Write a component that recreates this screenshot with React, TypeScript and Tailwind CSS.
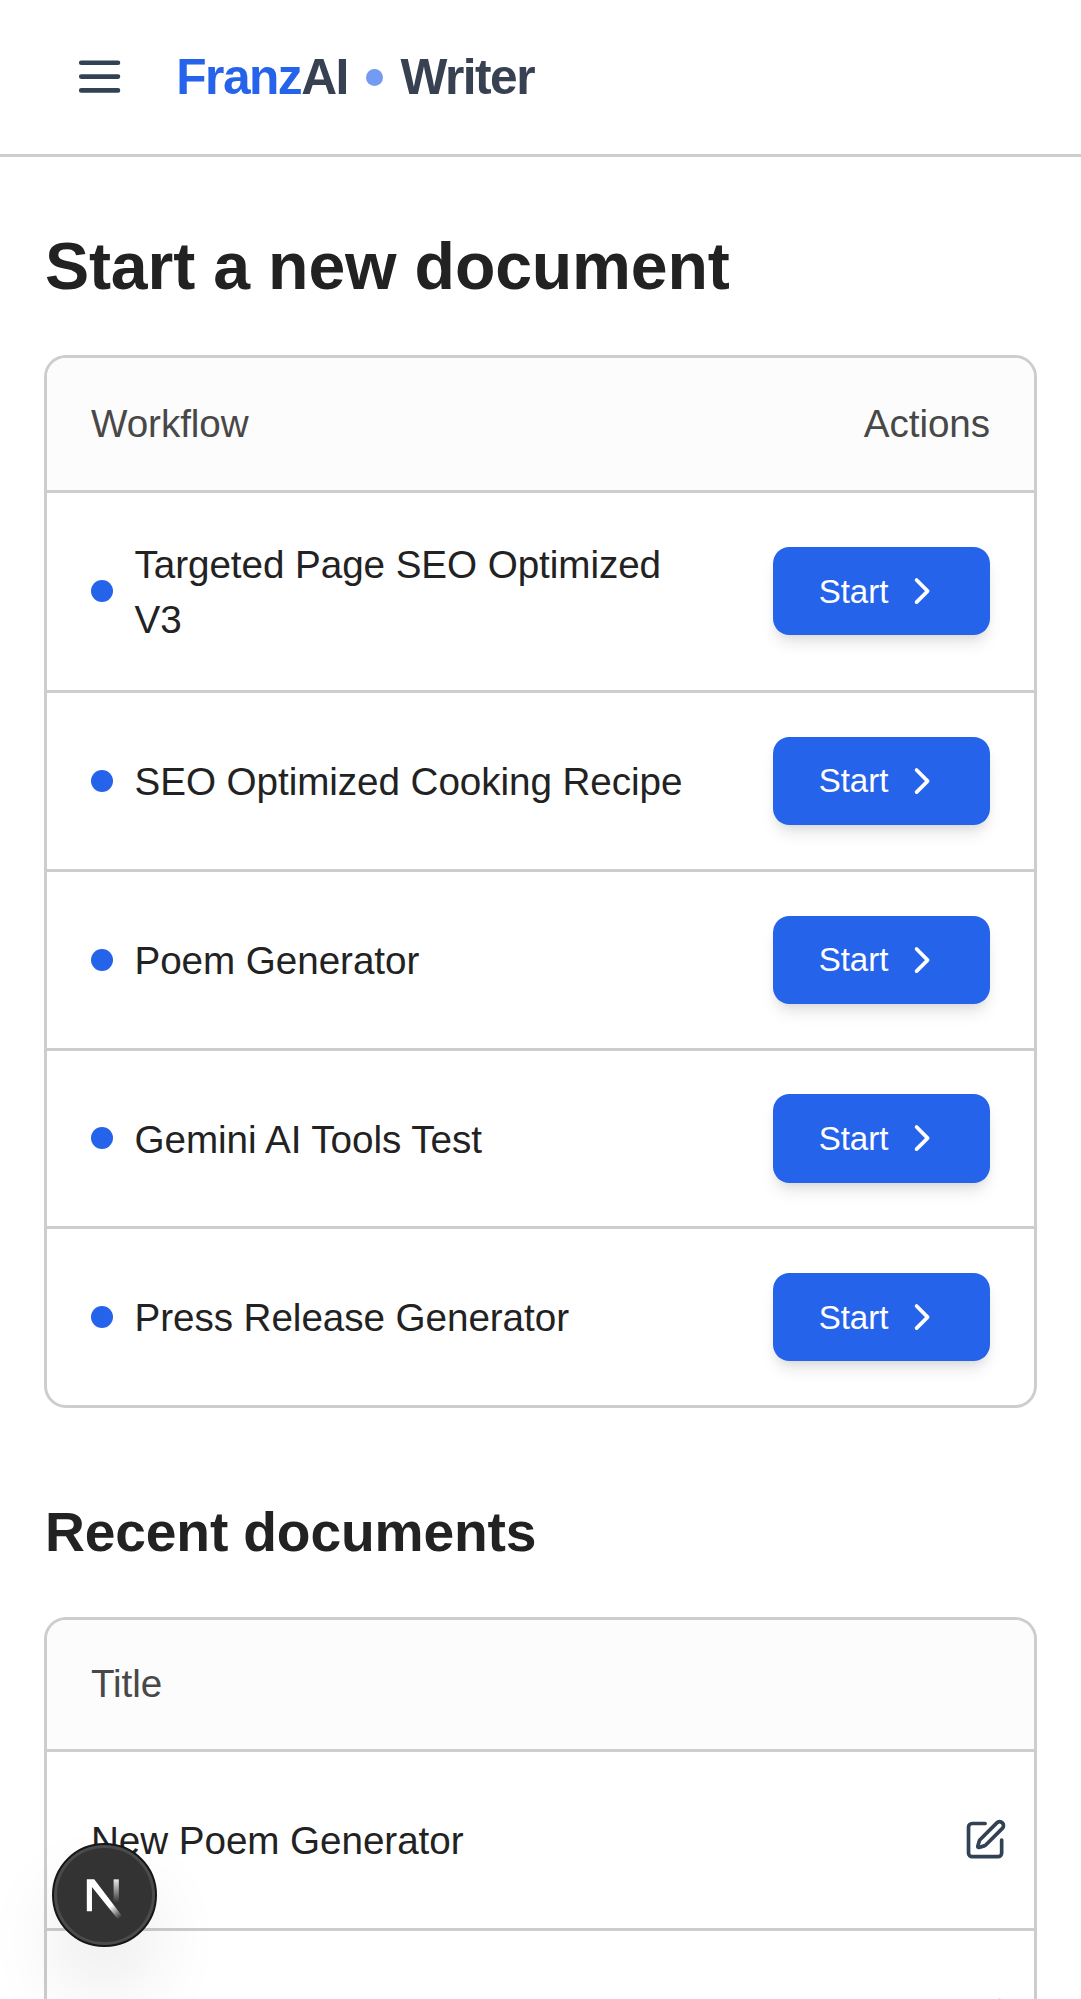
import React from "react";

const workflows = [
  "Targeted Page SEO Optimized V3",
  "SEO Optimized Cooking Recipe",
  "Poem Generator",
  "Gemini AI Tools Test",
  "Press Release Generator",
];

const documents = ["New Poem Generator", ""];

function MenuIcon() {
  return (
    <svg
      className="h-[55.2px] w-[55.2px] text-[#334155]"
      viewBox="0 0 24 24"
      fill="none"
      stroke="currentColor"
      strokeWidth="2"
      strokeLinecap="round"
    >
      <path d="M4 6h16M4 12h16M4 18h16" />
    </svg>
  );
}

function ChevronRight() {
  return (
    <svg
      className="h-[44.2px] w-[44.2px]"
      viewBox="0 0 24 24"
      fill="none"
      stroke="currentColor"
      strokeWidth="2"
      strokeLinecap="round"
      strokeLinejoin="round"
    >
      <path d="m9 18 6-6-6-6" />
    </svg>
  );
}

function EditIcon() {
  return (
    <svg
      className="h-[44.2px] w-[44.2px] text-[#334155]"
      viewBox="0 0 24 24"
      fill="none"
      stroke="currentColor"
      strokeWidth="2"
      strokeLinecap="round"
      strokeLinejoin="round"
    >
      <path d="M12 3H5a2 2 0 0 0-2 2v14a2 2 0 0 0 2 2h14a2 2 0 0 0 2-2v-7" />
      <path d="M18.375 2.625a1 1 0 0 1 3 3l-9.013 9.014a2 2 0 0 1-.853.505l-2.873.84a.5.5 0 0 1-.62-.62l.84-2.873a2 2 0 0 1 .506-.852z" />
    </svg>
  );
}

function Header() {
  return (
    <header className="flex h-[157px] items-center border-b-[3px] border-[#cdcdcd] pl-[71.5px]">
      <MenuIcon />
      <div className="ml-[49.5px] flex items-center text-[49.68px] leading-none font-bold tracking-[-0.03em] text-[#374151]">
        <span className="pt-[2px]">
          <span className="text-[#2563eb]">Franz</span>AI
        </span>
        <span className="mr-[17px] ml-[18.5px] h-[17px] w-[17px] rounded-full bg-[#739bf3]" />
        <span className="pt-[2px]">Writer</span>
      </div>
    </header>
  );
}

function StartButton() {
  return (
    <button className="flex h-[88.3px] w-[217.5px] shrink-0 items-center rounded-[16.5px] bg-[#2563eb] pl-[46px] text-[33.12px] leading-none text-white shadow-[0_11px_16px_-3px_rgba(0,0,0,0.1),0_5px_11px_-5px_rgba(0,0,0,0.1)]">
      <span className="w-[70px]">Start</span>
      <span className="ml-[11px]">
        <ChevronRight />
      </span>
    </button>
  );
}

function DevBadge() {
  return (
    <div className="absolute top-[1842.5px] left-[52.3px] h-[104.4px] w-[104.4px] rounded-full border-[2.5px] border-[#161616] bg-[#4b4b4b] p-[3px] shadow-[0_44px_88px_-22px_rgba(0,0,0,0.24)]">
      <div className="h-full w-full rounded-full bg-[#333]">
        <svg className="h-full w-full" viewBox="57.8 1848 93.4 93.4" fill="none">
          <defs>
            <linearGradient id="diagonal" gradientUnits="userSpaceOnUse" x1="110" y1="1906" x2="119.5" y2="1918">
              <stop stopColor="#fff" />
              <stop offset="1" stopColor="#fff" stopOpacity="0" />
            </linearGradient>
            <linearGradient id="stem" gradientUnits="userSpaceOnUse" x1="116" y1="1879" x2="116" y2="1902">
              <stop stopColor="#fff" stopOpacity="0.9" />
              <stop offset="1" stopColor="#fff" stopOpacity="0" />
            </linearGradient>
          </defs>
          <path d="M87.3 1910.5V1879H94.6L122 1915L118 1918.5L92.4 1886.5V1910.5Z" fill="url(#diagonal)" />
          <path d="M113.8 1879h5.2v23h-5.2z" fill="url(#stem)" />
        </svg>
      </div>
    </div>
  );
}

export default function App() {
  return (
    <div className="relative h-[1999px] w-[1081px] overflow-hidden bg-white font-['Liberation_Sans',Arial,sans-serif] text-[#222] antialiased">
      <Header />
      <main className="flex flex-col px-[44px]">
        <h1 className="mt-[76px] h-[67px] pl-px text-[66.24px] leading-[66px] font-bold tracking-[-0.18px]">
          Start a new document
        </h1>
        <section className="mt-[54.5px] flex w-[993px] flex-col overflow-hidden rounded-[22px] border-[3px] border-[#cdcdcd] text-[38.64px] leading-[55.2px] tracking-[-0.06px]">
          <div className="flex h-[132px] items-center justify-between bg-[#fcfcfc] px-[44px] text-[#484848]">
            <span>Workflow</span>
            <span>Actions</span>
          </div>
          {workflows.map((name, i) => (
            <div
              key={name}
              className={
                (i === 0 ? "h-[200.7px]" : "h-[178.7px]") +
                " flex items-center justify-between border-t-[3px] border-[#cdcdcd] px-[44px]"
              }
            >
              <div className="flex items-center gap-[21.5px]">
                <span className="h-[22px] w-[22px] shrink-0 rounded-full bg-[#2563eb]" />
                <span className="w-[556px] pt-[2px]">{name}</span>
              </div>
              <StartButton />
            </div>
          ))}
        </section>
        <h2 className="mt-[97px] h-[54px] pl-px text-[55.2px] leading-[55px] font-bold tracking-[-0.15px]">
          Recent documents
        </h2>
        <section className="mt-[58px] flex w-[993px] flex-col overflow-hidden rounded-t-[22px] border-[3px] border-b-0 border-[#cdcdcd] text-[38.64px] leading-[55.2px] tracking-[-0.06px]">
          <div className="flex h-[129px] items-center bg-[#fcfcfc] px-[44px] pb-[2px] text-[#484848]">Title</div>
          {documents.map((title, i) => (
            <div
              key={i}
              className="flex h-[178.8px] shrink-0 items-center justify-between border-t-[3px] border-[#cdcdcd] pr-[27px] pl-[44px]"
            >
              <span className="pt-[2px]">{title}</span>
              <EditIcon />
            </div>
          ))}
        </section>
      </main>
      <DevBadge />
    </div>
  );
}
